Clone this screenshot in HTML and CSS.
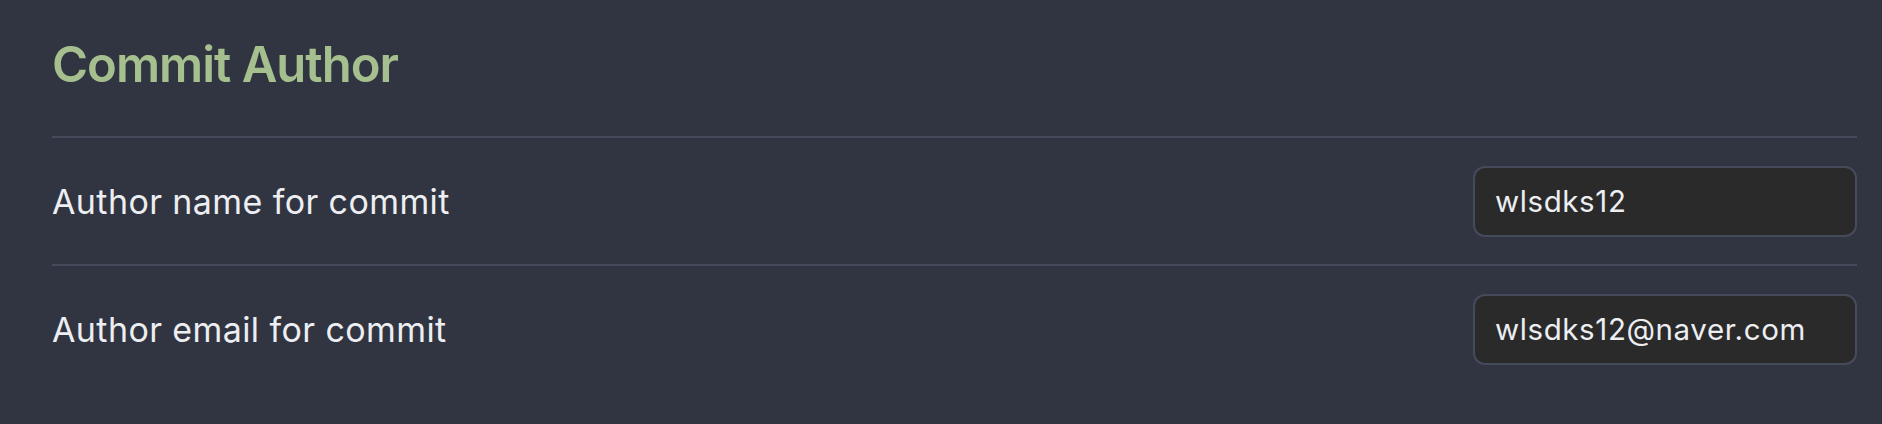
FILE: index.html
```html
<!DOCTYPE html>
<html>
<head>
<meta charset="utf-8">
<link rel="stylesheet" href="styles.css">
</head>
<body>
<div class="page">
  <h2 class="heading">Commit Author</h2>
  <div class="setting">
    <div class="label">Author name for commit</div>
    <input class="field" type="text" value="wlsdks12">
  </div>
  <div class="setting">
    <div class="label">Author email for commit</div>
    <input class="field" type="text" value="wlsdks12@naver.com">
  </div>
</div>
</body>
</html>
```

FILE: styles.css
```css
html, body {
  margin: 0;
  padding: 0;
  background: #313541;
  height: 100%;
}
.page {
  padding: 0 25px 0 52px;
  font-family: Inter, "Noto Sans", sans-serif;
  color: #eceef2;
}
.heading {
  margin: 0;
  height: 136px;
  box-sizing: border-box;
  padding-top: 35px;
  font-size: 49px;
  line-height: 60px;
  font-weight: 600;
  color: #a6bf8e;
  letter-spacing: -1px;
}
.setting {
  border-top: 2px solid #464b5b;
  height: 128px;
  box-sizing: border-box;
  display: flex;
  align-items: center;
  justify-content: space-between;
}
.label {
  font-size: 34px;
  line-height: 44px;
  letter-spacing: 0.4px;
  padding-top: 2px;
}
.field {
  width: 384px;
  height: 71px;
  box-sizing: border-box;
  background: #2a2a2a;
  border: 2px solid #464b5b;
  border-radius: 12px;
  padding: 0 20px;
  font-family: Inter, "Noto Sans", sans-serif;
  font-size: 29.5px;
  letter-spacing: 0.6px;
  color: #eceef2;
  outline: none;
}
```
